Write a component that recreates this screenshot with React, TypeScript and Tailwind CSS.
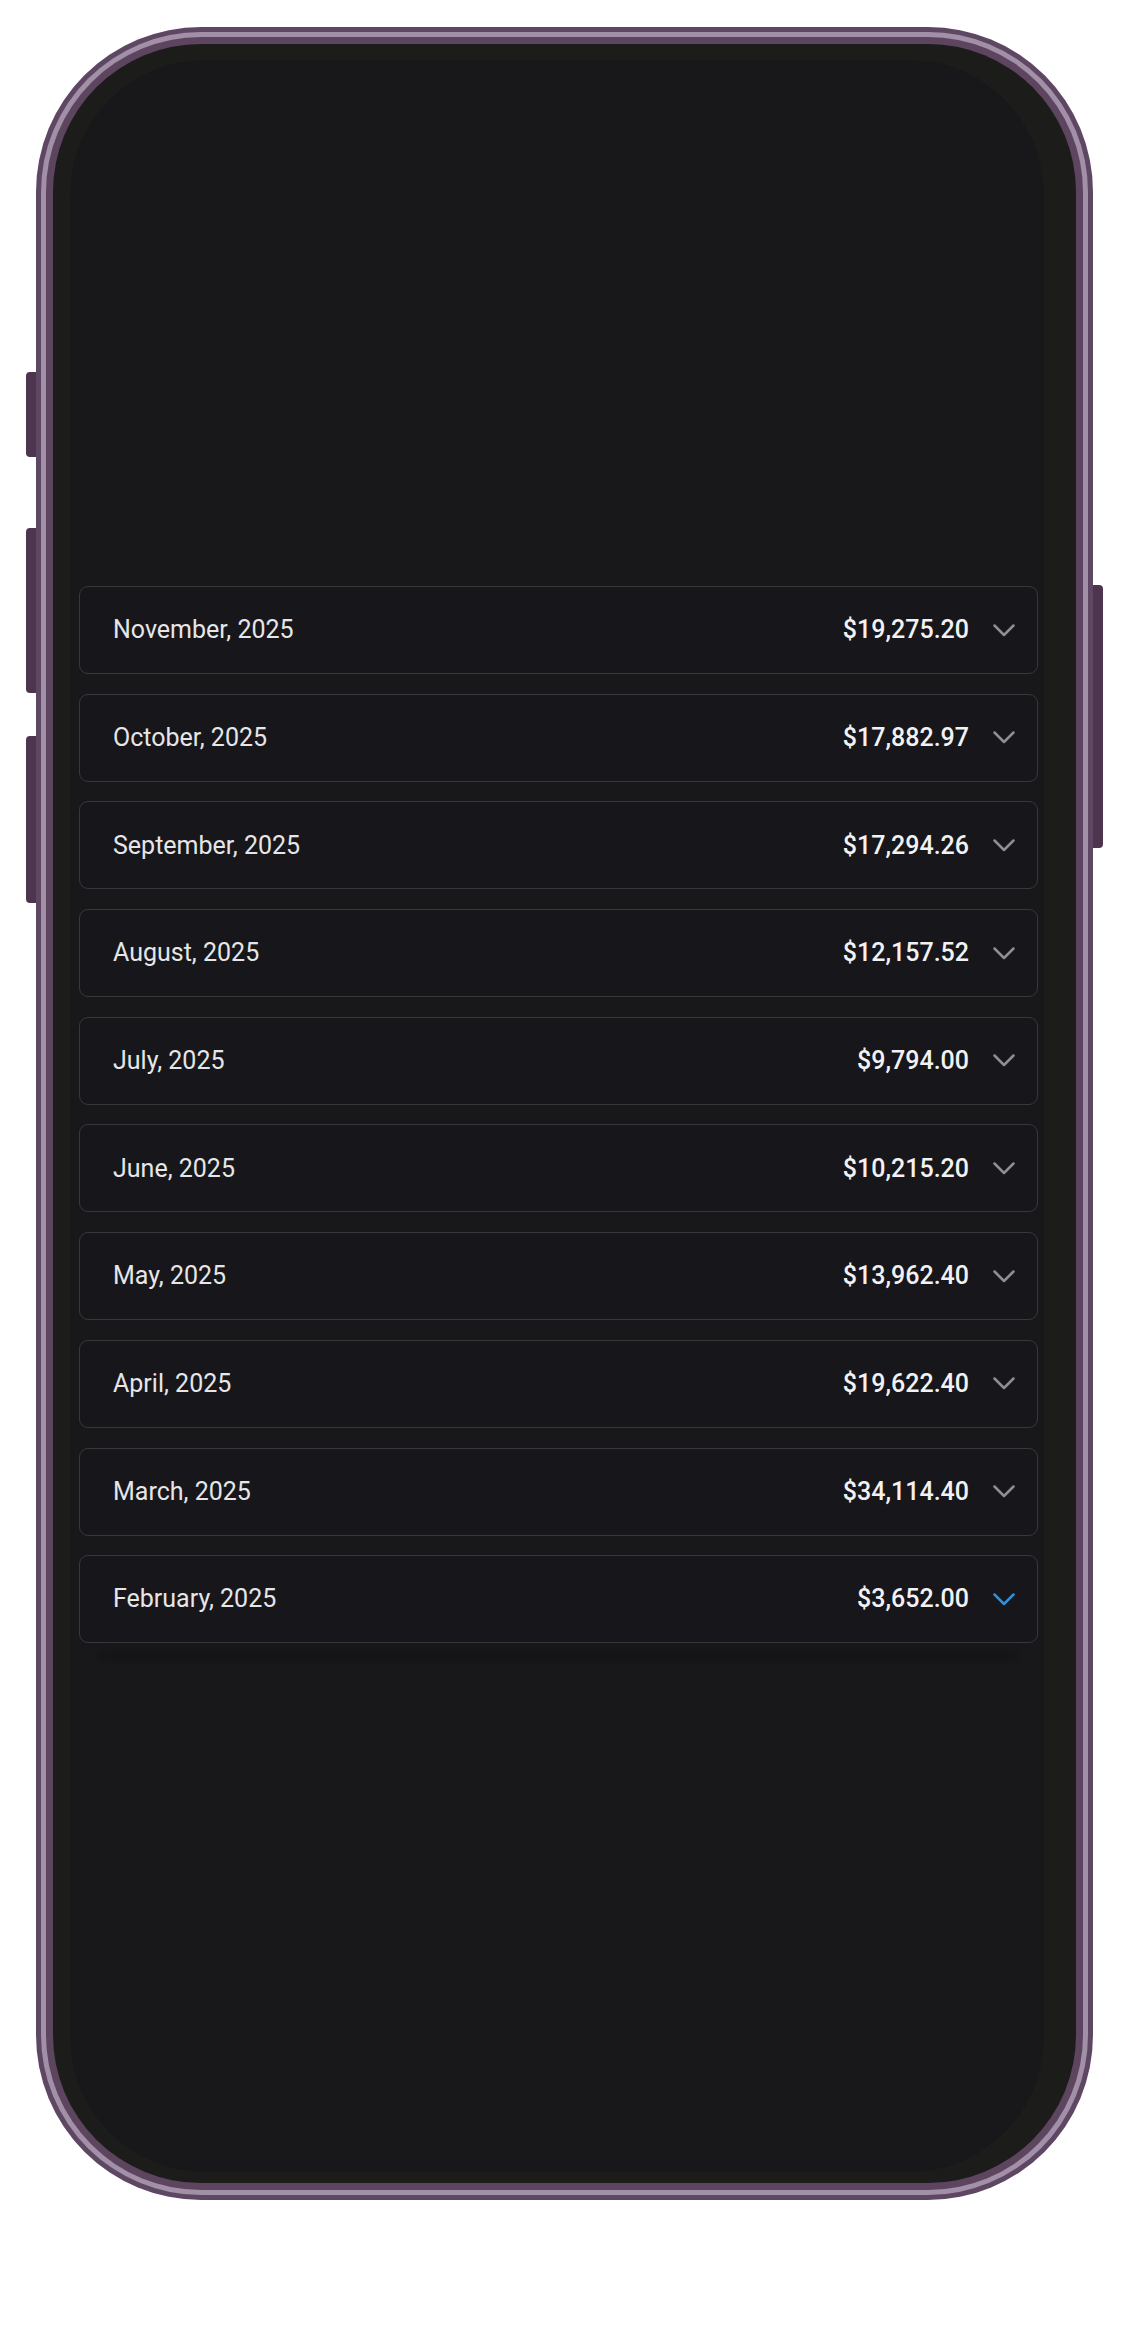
const months = [
  { label: "November, 2025", amount: "$19,275.20" },
  { label: "October, 2025", amount: "$17,882.97" },
  { label: "September, 2025", amount: "$17,294.26" },
  { label: "August, 2025", amount: "$12,157.52" },
  { label: "July, 2025", amount: "$9,794.00" },
  { label: "June, 2025", amount: "$10,215.20" },
  { label: "May, 2025", amount: "$13,962.40" },
  { label: "April, 2025", amount: "$19,622.40" },
  { label: "March, 2025", amount: "$34,114.40" },
  { label: "February, 2025", amount: "$3,652.00", active: true },
];

const Chevron = ({ active }: { active?: boolean }) => (
  <svg
    width="22"
    height="13"
    viewBox="0 0 22 13"
    fill="none"
    stroke={active ? "#2f8fdb" : "#8f8e97"}
    strokeWidth="2.5"
    strokeLinecap="round"
    strokeLinejoin="round"
  >
    <polyline points="1.5,1.5 11,11 20.5,1.5" />
  </svg>
);

const MonthRow = ({ label, amount, active }: { label: string; amount: string; active?: boolean }) => (
  <div className="h-[88px] flex items-center justify-between rounded-[9px] border-[1.5px] border-[#38373c] bg-[#17161a] pl-[33px] pr-[22px]">
    <span className="text-[25px] text-[#e6e6e8]">{label}</span>
    <div className="flex items-center gap-[24px]">
      <span className="text-[25px] font-medium text-[#f2f2f4]">{amount}</span>
      <Chevron active={active} />
    </div>
  </div>
);

export default function App() {
  return (
    <div
      className="min-h-[2344px] bg-white pt-[27px] pl-[36px]"
      style={{ fontFamily: "Roboto, 'Noto Sans', sans-serif" }}
    >
      <div className="relative w-[1057px] h-[2173px]">
        {/* side buttons */}
        <div className="absolute left-[-10px] top-[345px] w-[11px] h-[85px] rounded-l-[4px] bg-[#4d3550]" />
        <div className="absolute left-[-10px] top-[501px] w-[11px] h-[165px] rounded-l-[4px] bg-[#4d3550]" />
        <div className="absolute left-[-10px] top-[709px] w-[11px] h-[167px] rounded-l-[4px] bg-[#4d3550]" />
        <div className="absolute right-[-10px] top-[558px] w-[11px] h-[263px] rounded-r-[4px] bg-[#4d3550]" />

        <div className="relative h-full rounded-[165px] bg-[#5e4762] p-[5px]">
          <div className="h-full rounded-[160px] bg-[#a28fa8] p-[5px]">
            <div className="h-full rounded-[155px] bg-[#5d4560] p-[7px]">
              <div className="h-full flex rounded-[148px] bg-[#1c1c1a] pl-[17px] pr-[32px] pt-[16px] pb-[11px]">
                <div className="flex-1 rounded-[135px] bg-[#18181a] pl-[9px] pr-[6px] pt-[526px]">
                  <div className="flex flex-col gap-[19.7px]">
                    {months.map((m) => (
                      <MonthRow key={m.label} {...m} />
                    ))}
                  </div>
                  <div className="mx-[20px] mt-[8px] h-[10px] bg-[#151417] blur-[3px]" />
                </div>
              </div>
            </div>
          </div>
        </div>
      </div>
    </div>
  );
}
